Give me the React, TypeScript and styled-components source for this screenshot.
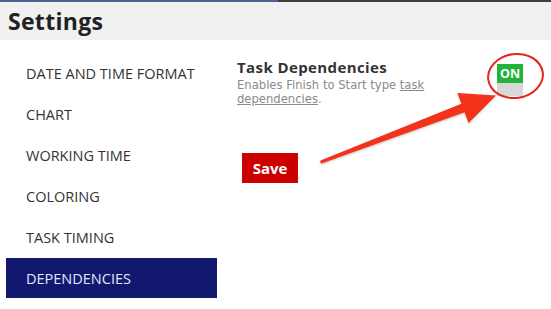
import React, { useState } from 'react';
import styled, { createGlobalStyle } from 'styled-components';

const GlobalStyle = createGlobalStyle`
  html, body {
    margin: 0;
    padding: 0;
    background: #ffffff;
  }
  body {
    font-family: 'Open Sans', 'Liberation Sans', sans-serif;
  }
`;

const Page = styled.div`
  position: relative;
  width: 551px;
  height: 309px;
  overflow: hidden;
  background: #fff;
`;

const TopStrip = styled.div`
  height: 2px;
  display: flex;
`;

const StripPart = styled.div<{ $color: string; $width?: number }>`
  background: ${p => p.$color};
  width: ${p => (p.$width ? `${p.$width}px` : 'auto')};
  flex: ${p => (p.$width ? 'none' : '1')};
`;

const Header = styled.div`
  height: 38px;
  background: #f1f1f1;
  display: flex;
  align-items: center;
  padding-left: 8px;
`;

const Title = styled.h1`
  margin: 0;
  font-family: 'Open Sans', sans-serif;
  font-weight: 700;
  font-size: 23px;
  color: #222;
  letter-spacing: 0.3px;
`;

const Body = styled.div`
  display: flex;
  gap: 20px;
  padding-top: 13px;
`;

const Sidebar = styled.nav`
  width: 211px;
  margin-left: 6px;
  display: flex;
  flex-direction: column;
  gap: 1px;
`;

const NavItem = styled.div<{ $active?: boolean }>`
  height: 40px;
  display: flex;
  align-items: center;
  padding-left: 20px;
  font-family: 'Open Sans', sans-serif;
  font-size: 14.5px;
  color: ${p => (p.$active ? '#e4e6ff' : '#333')};
  background: ${p => (p.$active ? '#12186e' : 'transparent')};
  cursor: pointer;
`;

const Content = styled.div`
  flex: 1;
  padding-top: 5px;
  padding-right: 28px;
`;

const SettingRow = styled.div`
  display: flex;
  justify-content: space-between;
  align-items: flex-start;
`;

const SettingText = styled.div`
  width: 205px;
  display: flex;
  flex-direction: column;
  gap: 1px;
`;

const SettingTitle = styled.div`
  font-family: 'Open Sans', sans-serif;
  font-weight: 700;
  font-size: 15px;
  line-height: 19px;
  letter-spacing: 0.4px;
  color: #333;
`;

const SettingDesc = styled.div`
  font-family: 'DejaVu Sans', sans-serif;
  font-size: 11.6px;
  line-height: 14px;
  color: #8a8a8a;

  a {
    color: #8a8a8a;
    text-decoration: underline;
  }
`;

const ToggleWrap = styled.div`
  position: relative;
  margin-top: 6px;
  width: 26px;
  cursor: pointer;
`;

const ToggleOn = styled.div`
  height: 19px;
  background: #21b33a;
  color: #fff;
  font-family: 'Open Sans', sans-serif;
  font-weight: 700;
  font-size: 12.5px;
  display: flex;
  align-items: center;
  justify-content: center;
`;

const ToggleOff = styled.div`
  height: 13px;
  background: #d9d9d9;
`;

const Ring = styled.div`
  position: absolute;
  left: -10px;
  top: -11px;
  width: 53px;
  height: 42px;
  border: 2.5px solid #e3261b;
  border-radius: 50%;
  transform: rotate(-8deg);
  pointer-events: none;
`;

const SaveButton = styled.button`
  margin: 47px 0 0 5px;
  width: 56px;
  height: 30px;
  border: none;
  background: #cc0000;
  color: #fff;
  font-family: 'Open Sans', sans-serif;
  font-weight: 700;
  font-size: 15px;
  cursor: pointer;
  padding: 0;
`;

const ArrowLayer = styled.svg`
  position: absolute;
  left: 0;
  top: 0;
  pointer-events: none;
`;

const items = [
  'DATE AND TIME FORMAT',
  'CHART',
  'WORKING TIME',
  'COLORING',
  'TASK TIMING',
  'DEPENDENCIES',
];

const App: React.FC = () => {
  const [active, setActive] = useState('DEPENDENCIES');
  const [enabled, setEnabled] = useState(true);

  return (
    <Page>
      <GlobalStyle />
      <TopStrip>
        <StripPart $color="#4b6591" $width={278} />
        <StripPart $color="#3d3d3d" />
      </TopStrip>
      <Header>
        <Title>Settings</Title>
      </Header>
      <Body>
        <Sidebar>
          {items.map(item => (
            <NavItem key={item} $active={item === active} onClick={() => setActive(item)}>
              {item}
            </NavItem>
          ))}
        </Sidebar>
        <Content>
          <SettingRow>
            <SettingText>
              <SettingTitle>Task Dependencies</SettingTitle>
              <SettingDesc>
                Enables Finish to Start type <a href="#">task dependencies</a>.
              </SettingDesc>
            </SettingText>
            <ToggleWrap onClick={() => setEnabled(!enabled)}>
              <ToggleOn>{enabled ? 'ON' : ''}</ToggleOn>
              <ToggleOff />
              <Ring />
            </ToggleWrap>
          </SettingRow>
          <SaveButton>Save</SaveButton>
        </Content>
      </Body>
      <ArrowLayer width="551" height="309" viewBox="0 0 551 309">
        <defs>
          <filter id="arrowShadow" x="-10%" y="-10%" width="120%" height="130%">
            <feDropShadow dx="0" dy="1" stdDeviation="1" floodColor="#000" floodOpacity="0.25" />
          </filter>
        </defs>
        <path
          d="M320.5 160.6 L461.4 103.8 L457.4 93 L496 95.5 L468.6 123 L464.6 112.2 L321.5 163.4 Q319.5 162.5 320.5 160.6 Z"
          fill="#f3321b"
          filter="url(#arrowShadow)"
        />
      </ArrowLayer>
    </Page>
  );
};

export default App;
